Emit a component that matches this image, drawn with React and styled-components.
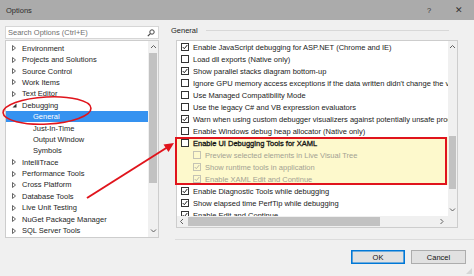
import React from 'react';
import styled, { createGlobalStyle } from 'styled-components';

const GlobalStyle = createGlobalStyle`
  html, body {
    margin: 0;
    padding: 0;
    background: #f0f0f0;
  }
  body {
    font-family: "Liberation Sans", Arial, sans-serif;
    font-size: 7.5px;
    color: #1e1e1e;
  }
`;

const Dialog = styled.div`
  position: relative;
  width: 474px;
  height: 276px;
  overflow: hidden;
  background: #f0f0f0;
  display: flex;
  flex-direction: column;
`;

const TitleBar = styled.div`
  height: 20px;
  flex: none;
  background: #ababab;
  display: flex;
  align-items: center;
  padding: 0 0 0 6px;
  color: #2b2b2b;
`;

const Title = styled.div`
  flex: 1;
`;

const TitleButton = styled.div`
  width: 30px;
  text-align: center;
  font-size: ${(p) => (p.$big ? '9px' : '7.5px')};
  color: #333;
`;

const Body = styled.div`
  flex: 1;
  display: flex;
`;

const LeftPane = styled.div`
  width: 154px;
  margin-left: 5px;
  padding-top: 6px;
  display: flex;
  flex-direction: column;
`;

const SearchBox = styled.div`
  height: 13px;
  box-sizing: border-box;
  border: 1px solid #d6d6d6;
  background: #fff;
  display: flex;
  align-items: center;
  padding: 0 3px 0 2px;
  color: #707070;
`;

const SearchText = styled.div`
  flex: 1;
`;

const TreeBox = styled.div`
  margin-top: 1px;
  height: 198px;
  box-sizing: border-box;
  border: 1px solid #cdcdcd;
  background: #fff;
  display: flex;
  overflow: hidden;
`;

const TreeList = styled.div`
  flex: 1;
  padding-top: 1.6px;
  overflow: hidden;
`;

const TreeRow = styled.div`
  height: 11.4px;
  display: flex;
  align-items: center;
  padding-left: ${(p) => p.$level * 11}px;
  background: ${(p) => (p.$selected ? '#3592f0' : 'transparent')};
  color: ${(p) => (p.$selected ? '#fff' : '#1e1e1e')};
  white-space: nowrap;
`;

const Expander = styled.div`
  width: 16px;
  flex: none;
  display: flex;
  align-items: center;
  padding-left: 6px;
  box-sizing: border-box;
`;

const VScroll = styled.div`
  width: ${(p) => p.$w || 10}px;
  flex: none;
  background: #f0f0f0;
  display: flex;
  flex-direction: column;
`;

const ScrollButton = styled.div`
  height: ${(p) => p.$h || 12}px;
  flex: none;
  display: flex;
  align-items: center;
  justify-content: center;
`;

const ScrollGap = styled.div`
  height: ${(p) => p.$h}px;
  flex: ${(p) => (p.$h ? 'none' : 1)};
`;

const ThumbV = styled.div`
  height: ${(p) => p.$h}px;
  margin: 0 1px;
  background: #c2c2c2;
`;

const RightPane = styled.div`
  flex: 1;
  display: flex;
  flex-direction: column;
  padding-left: 12px;
`;

const GroupHeader = styled.div`
  height: 19px;
  margin-top: 1px;
  display: flex;
  align-items: center;
  color: #1e1e1e;
`;

const GroupRule = styled.div`
  flex: none;
  width: 243px;
  height: 1px;
  margin-left: 8px;
  background: #d8d8d8;
`;

const ListBox = styled.div`
  margin-left: 5px;
  width: 282px;
  height: 188px;
  box-sizing: border-box;
  border: 1px solid #cdcdcd;
  background: #fff;
  display: grid;
  grid-template-columns: 1fr 9px;
  grid-template-rows: 1fr 11px;
  overflow: hidden;
`;

const ListRows = styled.div`
  overflow: hidden;
`;

const Highlight = styled.div`
  background: #fdf9cc;
`;

const CheckRow = styled.div`
  height: 12px;
  display: flex;
  align-items: center;
  padding-left: ${(p) => 4 + p.$indent * 12}px;
  white-space: nowrap;
  color: ${(p) => (p.$disabled ? '#a3a293' : '#1a1a1a')};
  -webkit-text-stroke: ${(p) => (p.$strong ? '0.3px #111' : '0')};
`;

const Box = styled.div`
  width: 8px;
  height: 8px;
  flex: none;
  box-sizing: border-box;
  border: 1px solid ${(p) => (p.$disabled ? '#c4c3b4' : '#333')};
  background: ${(p) => (p.$disabled ? 'transparent' : '#fff')};
  margin-right: 4px;
  display: flex;
  align-items: center;
  justify-content: center;
`;

const HScroll = styled.div`
  background: #f0f0f0;
  display: flex;
  align-items: center;
`;

const HButton = styled.div`
  width: 11px;
  flex: none;
  display: flex;
  justify-content: center;
`;

const ThumbH = styled.div`
  width: 192px;
  height: 9px;
  background: #c2c2c2;
`;

const HSpacer = styled.div`
  flex: 1;
`;

const Corner = styled.div`
  background: #f0f0f0;
`;

const Separator = styled.div`
  margin-top: 11px;
  margin-left: 4px;
  height: 1px;
  background: #dcdcdc;
`;

const ButtonRow = styled.div`
  margin-top: 10px;
  display: flex;
  justify-content: flex-end;
  gap: 6px;
  padding-right: 8px;
`;

const Button = styled.div`
  width: ${(p) => p.$w}px;
  height: 14px;
  box-sizing: border-box;
  background: #e1e1e1;
  border: 1px solid ${(p) => (p.$default ? '#0078d7' : '#adadad')};
  box-shadow: ${(p) => (p.$default ? 'inset 0 0 0 0.6px #0078d7' : 'none')};
  display: flex;
  align-items: center;
  justify-content: center;
  color: #111;
`;

const Grip = styled.div`
  position: absolute;
  right: 2px;
  bottom: 2px;
  width: 6px;
  height: 6px;
  background: radial-gradient(circle, #b8b8b8 0.6px, transparent 0.8px) 0 0 / 2px 2px;
  clip-path: polygon(100% 0, 100% 100%, 0 100%);
`;

const Overlay = styled.svg`
  position: absolute;
  left: 0;
  top: 0;
  pointer-events: none;
`;

const ClosedArrow = () => (
  <svg width="4" height="6" viewBox="0 0 4 6">
    <path d="M0.5 0.5 L3.5 3 L0.5 5.5 Z" fill="none" stroke="#555" strokeWidth="0.9" />
  </svg>
);

const OpenArrow = () => (
  <svg width="5" height="5" viewBox="0 0 5 5">
    <path d="M4.5 0.5 L4.5 4.5 L0.5 4.5 Z" fill="#333" />
  </svg>
);

const Chevron = ({ dir }) => {
  const d = {
    up: 'M1 4 L3.5 1.5 L6 4',
    down: 'M1 1.5 L3.5 4 L6 1.5',
    left: 'M4 1 L1.5 3.5 L4 6',
    right: 'M1.5 1 L4 3.5 L1.5 6',
  }[dir];
  return (
    <svg width="7" height="7" viewBox="0 0 7 7">
      <path d={d} fill="none" stroke="#606060" strokeWidth="1" />
    </svg>
  );
};

const Check = ({ color }) => (
  <svg width="6" height="6" viewBox="0 0 6 6">
    <path d="M0.7 3 L2.3 4.7 L5.3 1" fill="none" stroke={color} strokeWidth="1" />
  </svg>
);

const treeItems = [
  { label: 'Environment', arrow: 'closed' },
  { label: 'Projects and Solutions', arrow: 'closed' },
  { label: 'Source Control', arrow: 'closed' },
  { label: 'Work Items', arrow: 'closed' },
  { label: 'Text Editor', arrow: 'closed' },
  { label: 'Debugging', arrow: 'open' },
  { label: 'General', level: 1, selected: true },
  { label: 'Just-In-Time', level: 1 },
  { label: 'Output Window', level: 1 },
  { label: 'Symbols', level: 1 },
  { label: 'IntelliTrace', arrow: 'closed' },
  { label: 'Performance Tools', arrow: 'closed' },
  { label: 'Cross Platform', arrow: 'closed' },
  { label: 'Database Tools', arrow: 'closed' },
  { label: 'Live Unit Testing', arrow: 'closed' },
  { label: 'NuGet Package Manager', arrow: 'closed' },
  { label: 'SQL Server Tools', arrow: 'closed' },
  { label: 'Text Templating', arrow: 'closed' },
];

const options = [
  { label: 'Enable JavaScript debugging for ASP.NET (Chrome and IE)', checked: true },
  { label: 'Load dll exports (Native only)' },
  { label: 'Show parallel stacks diagram bottom-up', checked: true },
  { label: "Ignore GPU memory access exceptions if the data written didn't change the value" },
  { label: 'Use Managed Compatibility Mode' },
  { label: 'Use the legacy C# and VB expression evaluators' },
  { label: 'Warn when using custom debugger visualizers against potentially unsafe processes', checked: true },
  { label: 'Enable Windows debug heap allocator (Native only)' },
];

const xamlOptions = [
  { label: 'Enable UI Debugging Tools for XAML', strong: true },
  { label: 'Preview selected elements in Live Visual Tree', indent: 1, disabled: true },
  { label: 'Show runtime tools in application', indent: 1, disabled: true, checked: true },
  { label: 'Enable XAML Edit and Continue', indent: 1, disabled: true, checked: true },
];

const moreOptions = [
  { label: 'Enable Diagnostic Tools while debugging', checked: true },
  { label: 'Show elapsed time PerfTip while debugging', checked: true },
  { label: 'Enable Edit and Continue', checked: true },
];

const OptionRow = ({ item }) => (
  <CheckRow $indent={item.indent || 0} $disabled={item.disabled} $strong={item.strong}>
    <Box $disabled={item.disabled}>
      {item.checked && <Check color={item.disabled ? '#b9b8aa' : '#222'} />}
    </Box>
    {item.label}
  </CheckRow>
);

export default function App() {
  return (
    <>
      <GlobalStyle />
      <Dialog>
        <TitleBar>
          <Title>Options</Title>
          <TitleButton>?</TitleButton>
          <TitleButton $big>✕</TitleButton>
        </TitleBar>
        <Body>
          <LeftPane>
            <SearchBox>
              <SearchText>Search Options (Ctrl+E)</SearchText>
              <svg width="8" height="8" viewBox="0 0 8 8">
                <circle cx="5" cy="3" r="2.2" fill="none" stroke="#444" strokeWidth="1" />
                <path d="M3.4 4.6 L0.8 7.2" stroke="#444" strokeWidth="1.2" />
              </svg>
            </SearchBox>
            <TreeBox>
              <TreeList>
                {treeItems.map((t) => (
                  <TreeRow key={t.label} $level={t.level || 0} $selected={t.selected}>
                    <Expander>
                      {t.arrow === 'closed' && <ClosedArrow />}
                      {t.arrow === 'open' && <OpenArrow />}
                    </Expander>
                    {t.label}
                  </TreeRow>
                ))}
              </TreeList>
              <VScroll>
                <ScrollButton><Chevron dir="up" /></ScrollButton>
                <ThumbV $h={130} />
                <ScrollGap />
                <ScrollButton><Chevron dir="down" /></ScrollButton>
              </VScroll>
            </TreeBox>
          </LeftPane>
          <RightPane>
            <GroupHeader>
              General
              <GroupRule />
            </GroupHeader>
            <ListBox>
              <ListRows>
                {options.map((o) => <OptionRow key={o.label} item={o} />)}
                <Highlight>
                  {xamlOptions.map((o) => <OptionRow key={o.label} item={o} />)}
                </Highlight>
                {moreOptions.map((o) => <OptionRow key={o.label} item={o} />)}
              </ListRows>
              <VScroll $w={9}>
                <ScrollButton><Chevron dir="up" /></ScrollButton>
                <ScrollGap $h={83} />
                <ThumbV $h={53} />
                <ScrollGap />
                <ScrollButton><Chevron dir="down" /></ScrollButton>
              </VScroll>
              <HScroll>
                <HButton><Chevron dir="left" /></HButton>
                <ThumbH />
                <HSpacer />
                <HButton><Chevron dir="right" /></HButton>
              </HScroll>
              <Corner />
            </ListBox>
            <Separator />
            <ButtonRow>
              <Button $w={54} $default>OK</Button>
              <Button $w={55}>Cancel</Button>
            </ButtonRow>
          </RightPane>
        </Body>
        <Grip />
        <Overlay width="474" height="276" viewBox="0 0 474 276">
          <ellipse cx="47" cy="110.5" rx="44" ry="13.5" fill="none" stroke="#e0141c" strokeWidth="1.6" transform="rotate(-3 47 110.5)" />
          <rect x="176" y="138" width="270" height="46" fill="none" stroke="#e0141c" strokeWidth="2" />
          <path d="M87 198 L167 147.5" stroke="#e0141c" strokeWidth="2" />
          <path d="M174 143 L163.5 144.5 L168.5 152 Z" fill="#e0141c" />
        </Overlay>
      </Dialog>
    </>
  );
}
